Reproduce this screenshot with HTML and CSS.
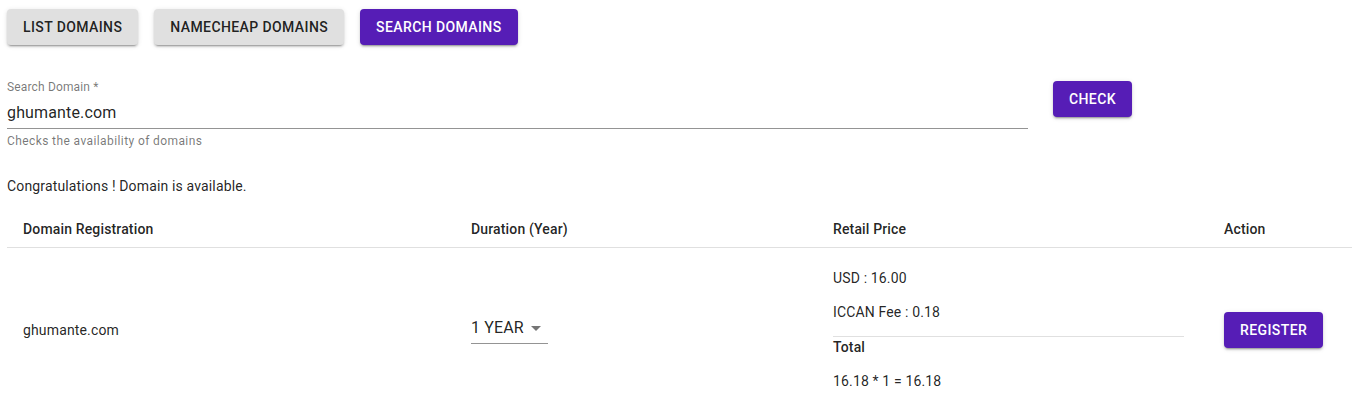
FILE: index.html
```html
<!DOCTYPE html>
<html>
<head>
<meta charset="utf-8">
<link rel="stylesheet" href="styles.css">
</head>
<body>
<div class="page">
  <div class="toolbar">
    <button class="btn btn-grey">List Domains</button>
    <button class="btn btn-grey">Namecheap Domains</button>
    <button class="btn btn-primary">Search Domains</button>
  </div>

  <div class="search-row">
    <div class="field">
      <label class="field-label">Search Domain *</label>
      <div class="field-input">ghumante.com</div>
      <div class="field-helper">Checks the availability of domains</div>
    </div>
    <button class="btn btn-primary btn-check">Check</button>
  </div>

  <p class="message">Congratulations ! Domain is available.</p>

  <table class="table">
    <colgroup>
      <col class="c1"><col class="c2"><col class="c3"><col class="c4">
    </colgroup>
    <thead>
      <tr>
        <th>Domain Registration</th>
        <th>Duration (Year)</th>
        <th>Retail Price</th>
        <th>Action</th>
      </tr>
    </thead>
    <tbody>
      <tr>
        <td>ghumante.com</td>
        <td>
          <div class="select">
            <span class="select-value">1 YEAR</span>
            <svg class="select-arrow" width="24" height="24" viewBox="0 0 24 24"><path d="M7 10l5 5 5-5z" fill="rgba(0,0,0,0.54)"/></svg>
          </div>
        </td>
        <td>
          <p class="price-line">USD : 16.00</p>
          <p class="price-line">ICCAN Fee : 0.18</p>
          <hr class="divider">
          <div class="total-label">Total</div>
          <p class="price-line">16.18 * 1 = 16.18</p>
        </td>
        <td><button class="btn btn-primary">Register</button></td>
      </tr>
    </tbody>
  </table>
</div>
</body>
</html>
```
FILE: styles.css
```css
* { box-sizing: border-box; }
html, body {
  margin: 0;
  padding: 0;
  background: #fff;
  font-family: Roboto, "Liberation Sans", Arial, sans-serif;
  color: rgba(0, 0, 0, 0.87);
  overflow: hidden;
}
.page {
  padding: 9px 0 0 7px;
}
.toolbar {
  display: flex;
  gap: 16px;
}
.btn {
  font-family: Roboto, "Liberation Sans", Arial, sans-serif;
  font-size: 14px;
  font-weight: 500;
  letter-spacing: 0.4px;
  text-transform: uppercase;
  line-height: 24px;
  height: 36px;
  padding: 6px 16px;
  border: 0;
  border-radius: 4px;
  box-shadow: 0 3px 1px -2px rgba(0,0,0,0.2), 0 2px 2px 0 rgba(0,0,0,0.14), 0 1px 5px 0 rgba(0,0,0,0.12);
  cursor: pointer;
}
.btn-grey {
  background: #e0e0e0;
  color: rgba(0, 0, 0, 0.87);
}
.btn-primary {
  background: #561db6;
  color: #fff;
}
.search-row {
  display: flex;
  align-items: flex-start;
  gap: 25px;
  margin-top: 35px;
}
.field {
  width: 1021px;
}
.field-label {
  display: block;
  font-size: 12px;
  line-height: 14px;
  letter-spacing: 0.15px;
  color: rgba(0, 0, 0, 0.54);
}
.field-input {
  font-size: 16px;
  line-height: 19px;
  letter-spacing: 0.15px;
  padding: 9px 0 6px;
  border-bottom: 1px solid rgba(0, 0, 0, 0.42);
}
.field-helper {
  font-size: 12px;
  line-height: 20px;
  margin-top: 2px;
  color: rgba(0, 0, 0, 0.54);
  letter-spacing: 0.4px;
}
.btn-check {
  margin-top: 1px;
}
.message {
  margin: 25px 0 0;
  font-size: 14px;
  line-height: 20px;
  letter-spacing: 0.15px;
}
.table {
  margin-top: 15px;
  border-collapse: collapse;
  table-layout: fixed;
  width: 1345px;
}
.c1 { width: 448px; }
.c2 { width: 362px; }
.c3 { width: 391px; }
.c4 { width: 144px; }
.table th, .table td {
  padding: 6px 24px 6px 16px;
  text-align: left;
  border-bottom: 1px solid rgba(224, 224, 224, 1);
  font-size: 14px;
  line-height: 24px;
  letter-spacing: 0.15px;
  vertical-align: middle;
}
.table th {
  font-weight: 500;
}
.table td {
  font-weight: 400;
}
.select {
  display: flex;
  align-items: center;
  position: relative;
  width: 77px;
  height: 32px;
  margin-bottom: 3px;
  border-bottom: 1px solid rgba(0, 0, 0, 0.42);
  font-size: 16px;
  letter-spacing: 0.15px;
}
.select-value {
  line-height: 19px;
}
.select-arrow {
  position: absolute;
  right: 0;
  top: 4px;
}
.price-line {
  margin: 14px 0;
  line-height: 20px;
}
.divider {
  margin: 0;
  border: 0;
  height: 1px;
  background: rgba(0, 0, 0, 0.12);
}
.total-label {
  font-weight: 500;
  line-height: 20px;
}
```
